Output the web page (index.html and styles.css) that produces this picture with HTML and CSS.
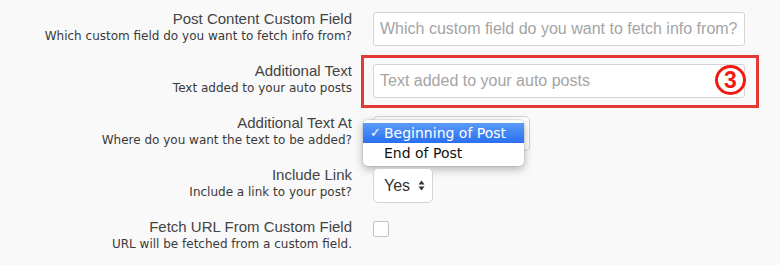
FILE: index.html
```html
<!DOCTYPE html>
<html lang="en">
<head>
  <meta charset="UTF-8" />
  <title>Auto Post Settings</title>
  <link rel="stylesheet" href="styles.css">
</head>
<body>
  <form class="settings">

    <div class="row">
      <div class="label">
        <div class="title">Post Content Custom Field</div>
        <div class="desc">Which custom field do you want to fetch info from?</div>
      </div>
      <div class="control">
        <input class="text-input wide" type="text" placeholder="Which custom field do you want to fetch info from?" />
      </div>
    </div>

    <div class="row">
      <div class="label">
        <div class="title">Additional Text</div>
        <div class="desc">Text added to your auto posts</div>
      </div>
      <div class="control">
        <input class="text-input wide" type="text" placeholder="Text added to your auto posts" />
        <div class="highlight"></div>
        <span class="step">3</span>
      </div>
    </div>

    <div class="row">
      <div class="label">
        <div class="title">Additional Text At</div>
        <div class="desc">Where do you want the text to be added?</div>
      </div>
      <div class="control">
        <div class="select-box position"></div>
        <!-- menu abierto -->
        <ul class="menu">
          <li class="active"><span class="check">✓</span>Beginning of Post</li>
          <li>End of Post</li>
        </ul>
      </div>
    </div>

    <div class="row">
      <div class="label">
        <div class="title">Include Link</div>
        <div class="desc">Include a link to your post?</div>
      </div>
      <div class="control">
        <div class="select-box small">
          <span>Yes</span>
          <svg class="arrows" width="7" height="11" viewBox="0 0 7 11">
            <path d="M3.5 0.5 L6.5 4.5 L0.5 4.5 Z" fill="#333"/>
            <path d="M3.5 10.5 L6.5 6.5 L0.5 6.5 Z" fill="#333"/>
          </svg>
        </div>
      </div>
    </div>

    <div class="row">
      <div class="label">
        <div class="title">Fetch URL From Custom Field</div>
        <div class="desc">URL will be fetched from a custom field.</div>
      </div>
      <div class="control">
        <span class="checkbox"></span>
      </div>
    </div>

  </form>
</body>
</html>
```

FILE: styles.css
```css
html, body {
  margin: 0;
  padding: 0;
  background-color: #f9f9f9;
  font-family: 'Liberation Sans', Arial, sans-serif;
  color: #444;
}
.settings {
  padding-top: 9px;
}
.row {
  display: grid;
  grid-template-columns: 352px 1fr;
  column-gap: 21px;
  height: 52px;
  align-items: start;
}
.label {
  text-align: right;
}
.title {
  font-size: 15px;
  line-height: 19px;
  color: #444;
}
.desc {
  font-family: 'DejaVu Sans', sans-serif;
  font-size: 12px;
  line-height: 16px;
  color: #3a3a3a;
}
.control {
  position: relative;
  padding-top: 3px;
}
.text-input {
  box-sizing: border-box;
  height: 34px;
  padding: 0 6px;
  border: 1px solid #d4d4d4;
  border-radius: 3px;
  background-color: white;
  font-family: 'Liberation Sans', Arial, sans-serif;
  font-size: 16px;
  color: #333;
}
.text-input::placeholder {
  color: #a4a4a4;
}
.wide {
  width: 372px;
}
.highlight {
  position: absolute;
  left: -12px;
  top: -6px;
  width: 398px;
  height: 53px;
  box-sizing: border-box;
  border: 3px solid #e53935;
}
.step {
  position: absolute;
  left: 342px;
  top: 4px;
  width: 31px;
  height: 30px;
  box-sizing: border-box;
  border: 3px solid #f01a12;
  border-radius: 50%;
  color: #f01a12;
  font-weight: bold;
  font-size: 23px;
  line-height: 24px;
  text-align: center;
}
.select-box {
  box-sizing: border-box;
  height: 35px;
  border: 1px solid #d4d4d4;
  border-radius: 5px;
  background-color: white;
  display: flex;
  align-items: center;
  font-size: 16px;
  color: #333;
}
.position {
  width: 157px;
}
.small {
  width: 60px;
  padding: 0 7px 0 10px;
  justify-content: space-between;
}
.menu {
  position: absolute;
  left: -10px;
  top: 7px;
  width: 161px;
  margin: 0;
  padding: 3px 0;
  list-style: none;
  background-color: white;
  border-radius: 5px;
  box-shadow: 0 3px 10px rgba(0, 0, 0, 0.3), 0 0 0 1px rgba(0, 0, 0, 0.06);
  font-family: 'DejaVu Sans', sans-serif;
  font-size: 14px;
}
.menu li {
  height: 20px;
  line-height: 20px;
  padding-left: 21px;
  position: relative;
  color: #111;
}
.menu li.active {
  background: linear-gradient(#5a9bf8, #2a6ff0);
  color: white;
}
.check {
  position: absolute;
  left: 7px;
  font-size: 13px;
  font-weight: bold;
}
.checkbox {
  display: block;
  width: 16px;
  height: 16px;
  box-sizing: border-box;
  margin-top: 1px;
  border: 1px solid #c4c4c4;
  border-radius: 2px;
  background-color: white;
}
```
